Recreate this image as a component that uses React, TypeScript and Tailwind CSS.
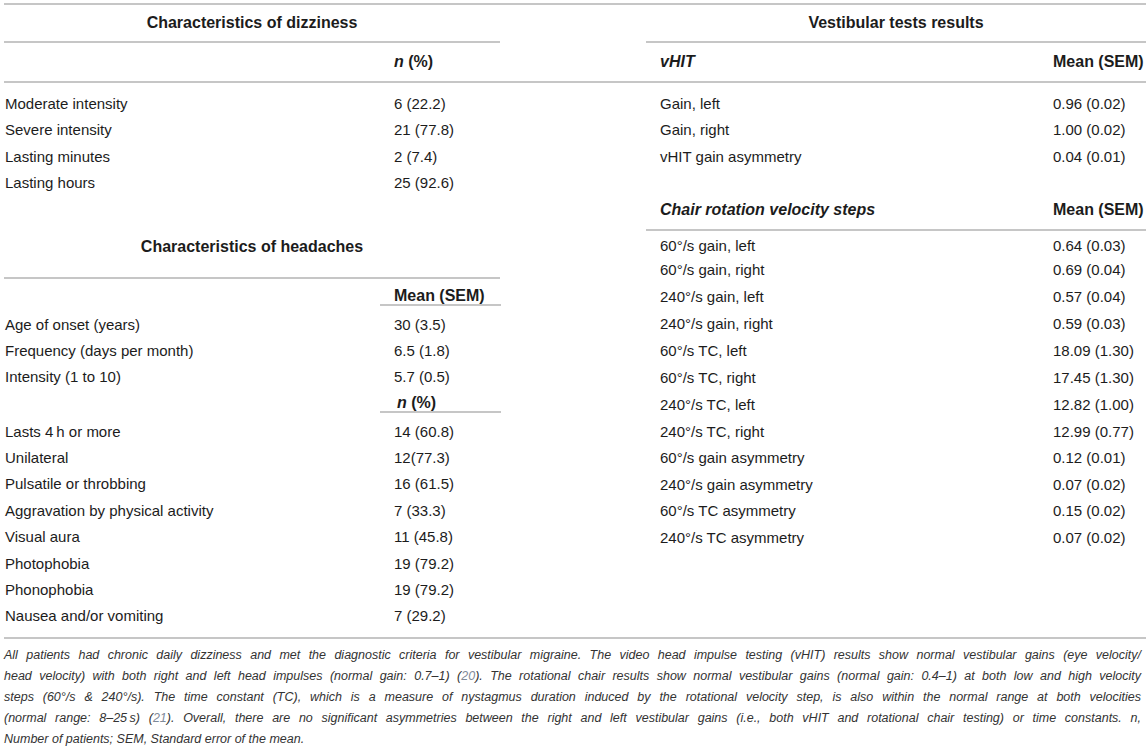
import React from 'react';

const dizziness = [
  ['Moderate intensity', '6 (22.2)'],
  ['Severe intensity', '21 (77.8)'],
  ['Lasting minutes', '2 (7.4)'],
  ['Lasting hours', '25 (92.6)'],
];

const headacheMeans = [
  ['Age of onset (years)', '30 (3.5)'],
  ['Frequency (days per month)', '6.5 (1.8)'],
  ['Intensity (1 to 10)', '5.7 (0.5)'],
];

const headacheCounts = [
  ['Lasts 4\u2009h or more', '14 (60.8)'],
  ['Unilateral', '12(77.3)'],
  ['Pulsatile or throbbing', '16 (61.5)'],
  ['Aggravation by physical activity', '7 (33.3)'],
  ['Visual aura', '11 (45.8)'],
  ['Photophobia', '19 (79.2)'],
  ['Phonophobia', '19 (79.2)'],
  ['Nausea and/or vomiting', '7 (29.2)'],
];

const vhit = [
  ['Gain, left', '0.96 (0.02)'],
  ['Gain, right', '1.00 (0.02)'],
  ['vHIT gain asymmetry', '0.04 (0.01)'],
];

// row heights differ a little in the source table
const chair = [
  ['60°/s gain, left', '0.64 (0.03)', 'h-[23px]'],
  ['60°/s gain, right', '0.69 (0.04)', 'h-[25.5px]'],
  ['240°/s gain, left', '0.57 (0.04)', 'h-[28px]'],
  ['240°/s gain, right', '0.59 (0.03)', 'h-[27px]'],
  ['60°/s TC, left', '18.09 (1.30)', 'h-[26.5px]'],
  ['60°/s TC, right', '17.45 (1.30)', 'h-[27px]'],
  ['240°/s TC, left', '12.82 (1.00)', 'h-[27px]'],
  ['240°/s TC, right', '12.99 (0.77)', 'h-[26.5px]'],
  ['60°/s gain asymmetry', '0.12 (0.01)', 'h-[26.5px]'],
  ['240°/s gain asymmetry', '0.07 (0.02)', 'h-[26.5px]'],
  ['60°/s TC asymmetry', '0.15 (0.02)', 'h-[26.5px]'],
  ['240°/s TC asymmetry', '0.07 (0.02)', 'h-[27px]'],
];

const LeftRow = ({ label, value }: { label: string; value: string }) => (
  <div className="flex h-[26.4px] items-center text-[15px]">
    <span className="w-[390px] pl-px">{label}</span>
    <span>{value}</span>
  </div>
);

const RightRow = ({ label, value, h = 'h-[26.4px]' }: { label: string; value: string; h?: string }) => (
  <div className={`flex items-center text-[15px] ${h}`}>
    <span className="w-[407px] pl-[14px]">{label}</span>
    <span>{value}</span>
  </div>
);

const LeftColumn = () => (
  <div className="pb-[7px]">
    {/* Dizziness */}
    <div className="flex h-[36px] w-[496px] items-center justify-center text-[16px] font-bold">
      Characteristics of dizziness
    </div>
    <div className="w-[496px] border-t-2 border-[#c6c6c6]" />
    <div className="flex h-[40px] items-center border-b-2 border-[#c6c6c6] pl-[390px] text-[16px] font-bold">
      <i>n</i>&nbsp;(%)
    </div>
    <div className="pt-[7.8px]">
      {dizziness.map(([l, v]) => (
        <LeftRow key={l} label={l} value={v} />
      ))}
    </div>

    {/* Headaches */}
    <div className="mt-[40.6px] mb-[20px] w-[496px] text-center text-[16px] font-bold leading-[20px]">
      Characteristics of headaches
    </div>
    <div className="w-[496px] border-t-2 border-[#c6c6c6]" />
    <div className="ml-[376px] flex h-[27px] w-[121px] items-end border-b-2 border-[#c6c6c6] pl-[14px] text-[16px] font-bold leading-[16px]">
      Mean (SEM)
    </div>
    <div className="mt-[5.8px]">
      {headacheMeans.map(([l, v]) => (
        <LeftRow key={l} label={l} value={v} />
      ))}
    </div>
    <div className="ml-[376px] flex h-[22px] w-[121px] items-end border-b-2 border-[#c6c6c6] pl-[17px] text-[16px] font-bold leading-[16px]">
      <i>n</i>&nbsp;(%)
    </div>
    <div className="mt-[5.8px]">
      {headacheCounts.map(([l, v]) => (
        <LeftRow key={l} label={l} value={v} />
      ))}
    </div>
  </div>
);

const RightColumn = () => (
  <div>
    <div className="flex h-[36px] items-center justify-center text-[16px] font-bold">
      Vestibular tests results
    </div>
    <div className="border-t-2 border-[#c6c6c6]" />
    <div className="flex h-[40px] items-center border-b-2 border-[#c6c6c6] text-[16px] font-bold">
      <i className="w-[407px] pl-[14px]">vHIT</i>
      <span>Mean (SEM)</span>
    </div>
    <div className="pt-[7.8px]">
      {vhit.map(([l, v]) => (
        <RightRow key={l} label={l} value={v} />
      ))}
    </div>
    <div className="mt-[30.2px] flex h-[31px] items-start border-b-2 border-[#c6c6c6] text-[16px] font-bold leading-[20px]">
      <i className="w-[407px] pl-[14px]">Chair rotation velocity steps</i>
      <span>Mean (SEM)</span>
    </div>
    <div className="mt-[3.5px]">
      {chair.map(([l, v, h]) => (
        <RightRow key={l} label={l} value={v} h={h} />
      ))}
    </div>
  </div>
);

const Ref = ({ n }: { n: string }) => <span className="text-[#7f8a99]">{n}</span>;

const lineCls = 'text-justify [text-align-last:justify]';

const Caption = () => (
  <div className="mt-[6.6px] pr-[5px] text-[12.5px] italic leading-[20.8px] text-[#333]">
    <div className={lineCls}>
      All patients had chronic daily dizziness and met the diagnostic criteria for vestibular migraine. The video head impulse testing (vHIT) results show normal vestibular gains (eye velocity/
    </div>
    <div className={lineCls}>
      head velocity) with both right and left head impulses (normal gain: 0.7–1) (<Ref n="20" />). The rotational chair results show normal vestibular gains (normal gain: 0.4–1) at both low and high velocity
    </div>
    <div className={lineCls}>
      steps (60°/s &amp; 240°/s). The time constant (TC), which is a measure of nystagmus duration induced by the rotational velocity step, is also within the normal range at both velocities
    </div>
    <div className={lineCls}>
      (normal range: 8–25{'\u2009'}s) (<Ref n="21" />). Overall, there are no significant asymmetries between the right and left vestibular gains (i.e., both vHIT and rotational chair testing) or time constants. n,
    </div>
    <div>Number of patients; SEM, Standard error of the mean.</div>
  </div>
);

export default function App() {
  return (
    <div className="min-h-screen w-[1146px] bg-white font-['Liberation_Sans',Arial,sans-serif] text-[#1c1c1c]">
      <div className="pl-1 pt-[3px]">
        <div className="grid grid-cols-[642px_500px] border-y-2 border-[#c6c6c6]">
          <LeftColumn />
          <RightColumn />
        </div>
        <Caption />
      </div>
    </div>
  );
}
